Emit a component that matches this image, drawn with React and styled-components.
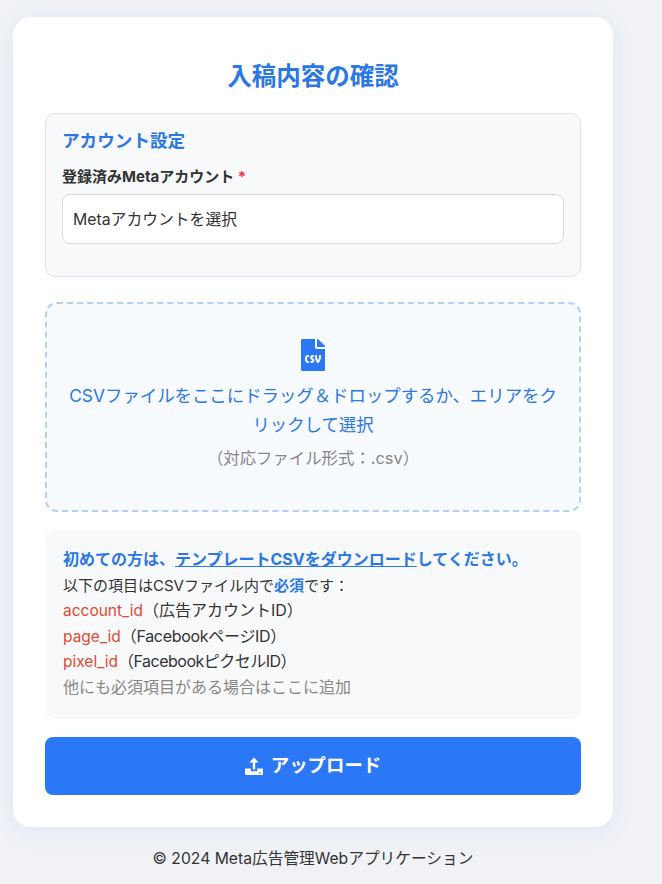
import React from "react";
import styled, { createGlobalStyle } from "styled-components";
import { FaFileCsv } from "react-icons/fa";

const Global = createGlobalStyle`
  html, body { margin: 0; padding: 0; background: #f0f2f5; }
  body { font-family: Inter, "Noto Sans CJK JP", sans-serif; color: #333; }
  * { box-sizing: border-box; }
`;
const Page = styled.div`
  width: 662px; min-height: 884px; padding: 17px 49px 0 13px;
`;
const Card = styled.main`
  width: 600px; height: 810px; padding: 40px 32px 32px; background: #fff;
  border-radius: 18px; box-shadow: 0 4px 24px rgba(44,120,246,.08);
  display: flex; flex-direction: column;
`;
const Title = styled.h1`
  margin: 0 0 18px; text-align: center; font-size: 24.5px; line-height: 38px; font-weight: 700; color: #2b78e4;
`;
const Section = styled.section`
  height: 164px; padding: 16px; background: #f7f9fb; border: 1px solid #e0e4ea; border-radius: 10px; margin-bottom: 25px;
`;
const SectionTitle = styled.h2`
  margin: 0 0 13px; font-size: 17.6px; line-height: 22px; font-weight: 700; color: #2b78e4;
`;
const Label = styled.label`
  display: block; margin-bottom: 5px; font-size: 15px; line-height: 24px; font-weight: 700; color: #333;
`;
const Req = styled.span` color: #e53950; `;
const Select = styled.div`
  height: 50px; padding: 0 10px 2px; display: flex; align-items: center; background: #fff;
  border: 1px solid #d7dbe2; border-radius: 8px; font-size: 15.8px; color: #333;
`;
const Drop = styled.div`
  height: 210px; padding: 35px 16px 0; margin-bottom: 18px; background: #f7faff; border: 2px dashed #b3d0f7;
  border-radius: 12px; display: flex; flex-direction: column; align-items: center; text-align: center;
`;
const CsvIcon = styled(FaFileCsv)` width: 24px; height: 32px; color: #2b78f6; margin-bottom: 10px; flex: none; `;
const DropText = styled.div` font-size: 17.4px; line-height: 29px; color: #2b78e4; width: 500px; `;
const DropHint = styled.div` margin-top: 6px; font-size: 16.4px; line-height: 26px; color: #888; `;
const Info = styled.div`
  height: 189px; padding: 17px 18px; margin-bottom: 18px; background: #f7f9fb; border-radius: 10px;
  font-size: 16px; line-height: 25.5px; color: #333;
`;
const Strong = styled.div` font-weight: 700; color: #2b78e4; `;
const TplLink = styled.a` color: #2b78e4; text-decoration: underline; `;
const Small = styled.div` font-size: 15px; `;
const Must = styled.b` color: #2b78e4; `;
const Key = styled.span` color: #e04a32; font-size: 15.5px; `;
const Note = styled.span` letter-spacing: ${(p) => p.$tight || 0}px; `;
const Muted = styled.div` color: #888; `;
const Button = styled.button`
  height: 58px; width: 100%; padding: 0 0 4px; border: 0; border-radius: 8px; background: #2b78f6; color: #fff; font: inherit;
  font-size: 18.4px; font-weight: 700; display: flex; align-items: center; justify-content: center; gap: 8px;
`;
const UploadSvg = styled.svg` width: 18px; height: 18px; margin-top: 4px; fill: currentColor; flex: none; `;
const Footer = styled.footer`
  width: 600px; margin-top: 21px; text-align: center; font-size: 15.7px; line-height: 22px; color: #333;
`;

function UploadIcon() {
  return (
    <UploadSvg viewBox="0 0 18 18">
      <path d="M9 .5 13.6 5.6H10.2V12.6H7.8V5.6H4.4Z" />
      <path fillRule="evenodd" d="M0 11.5H5.8V14.2H12.2V11.5H18V17A1 1 0 0 1 17 18H1A1 1 0 0 1 0 17ZM14.2 15.2H15.8V16.4H14.2Z" />
    </UploadSvg>
  );
}

export default function App() {
  return (
    <Page>
      <Global />
      <Card>
        <Title>入稿内容の確認</Title>
        <Section>
          <SectionTitle>アカウント設定</SectionTitle>
          <Label>登録済みMetaアカウント <Req>*</Req></Label>
          <Select>Metaアカウントを選択</Select>
        </Section>
        <Drop>
          <CsvIcon />
          <DropText>CSVファイルをここにドラッグ＆ドロップするか、エリアをクリックして選択</DropText>
          <DropHint>（対応ファイル形式：.csv）</DropHint>
        </Drop>
        <Info>
          <Strong>初めての方は、<TplLink>テンプレートCSVをダウンロード</TplLink>してください。</Strong>
          <Small>以下の項目はCSVファイル内で<Must>必須</Must>です：</Small>
          <div><Key>account_id</Key><Note>（広告アカウントID）</Note></div>
          <div><Key>page_id</Key><Note $tight={-0.3}>（FacebookページID）</Note></div>
          <div><Key>pixel_id</Key><Note $tight={-0.5}>（FacebookピクセルID）</Note></div>
          <Muted>他にも必須項目がある場合はここに追加</Muted>
        </Info>
        <Button><UploadIcon />アップロード</Button>
      </Card>
      <Footer>© 2024 Meta広告管理Webアプリケーション</Footer>
    </Page>
  );
}
